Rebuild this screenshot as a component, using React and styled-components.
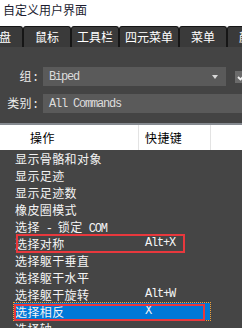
import React from 'react';
import styled, { createGlobalStyle } from 'styled-components';

const Global = createGlobalStyle`
  html, body { margin: 0; padding: 0; background: #444444; }
  body { font-family: "Noto Sans CJK SC", "Noto Sans", sans-serif; }
`;

const Window = styled.div`
  width: 242px;
  height: 328px;
  overflow: hidden;
  display: flex;
  flex-direction: column;
  background: #444444;
`;

const TitleBar = styled.div`
  flex: none;
  height: 26px;
  box-sizing: border-box;
  padding: 1px 0 0 3px;
  background: #ffffff;
  color: #1c1c30;
  font-size: 12px;
  line-height: 17px;
`;

const TabStrip = styled.div`
  flex: none;
  height: 21px;
  display: flex;
  background: #ffffff;
  overflow: hidden;
`;

const Tab = styled.div`
  flex: none;
  min-width: 48px;
  height: 21px;
  box-sizing: border-box;
  padding: 0 5px;
  margin-left: ${(p) => (p.$offset ? `${p.$offset}px` : '0')};
  border: 1px solid #161616;
  border-bottom: none;
  border-radius: 3px 3px 0 0;
  background: #3a3a3a;
  color: #ffffff;
  font-size: 12px;
  line-height: 19px;
  letter-spacing: 0;
  text-align: center;
  white-space: nowrap;
`;

const Form = styled.div`
  flex: none;
  display: flex;
  flex-direction: column;
  gap: 8px;
  padding: 20px 0 10px 0;
`;

const FieldRow = styled.div`
  display: flex;
  align-items: center;
  height: 19px;
`;

const Label = styled.div`
  flex: none;
  width: 38px;
  margin-right: 5px;
  text-align: right;
  color: #ececec;
  font-size: 12px;
  line-height: 19px;
  letter-spacing: 0.4px;
  white-space: nowrap;
`;

const Latin = styled.span`
  font-family: "Liberation Mono", monospace;
  font-size: 12px;
  letter-spacing: -1.2px;
`;

const Select = styled.div`
  flex: none;
  width: ${(p) => p.$w}px;
  height: 19px;
  box-sizing: border-box;
  display: flex;
  align-items: center;
  justify-content: space-between;
  padding: 0 8px 0 6px;
  background: #5a5a5a;
  color: #dcdcdc;
  font-family: "Liberation Mono", monospace;
  font-size: 12px;
  letter-spacing: -1.2px;
  white-space: nowrap;
`;

const Arrow = styled.span`
  width: 0;
  height: 0;
  border-left: 3px solid transparent;
  border-right: 3px solid transparent;
  border-top: 4px solid #d8d8d8;
`;

const CheckBox = styled.div`
  flex: none;
  width: 13px;
  height: 12px;
  margin-left: 9px;
  background: #6b6b6b;
  display: flex;
  align-items: center;
  justify-content: center;
`;

const Separator = styled.div`
  flex: none;
  height: 2px;
  background: #858a90;
`;

const Header = styled.div`
  flex: none;
  height: 25px;
  display: grid;
  grid-template-columns: 139px 72px 1fr;
  background: #ffffff;
`;

const HeadCell = styled.div`
  border-right: ${(p) => (p.$last ? 'none' : '1px solid #e3e3e3')};
  padding-left: ${(p) => p.$pad}px;
  color: #000000;
  font-size: 12px;
  line-height: 25px;
  letter-spacing: 0.4px;
  white-space: nowrap;
`;

const List = styled.div`
  flex: 1;
  display: flex;
  flex-direction: column;
  background: #454545;
`;

const Row = styled.div`
  flex: none;
  height: 17px;
  padding-left: 14px;
  display: flex;
`;

const Item = styled.div`
  position: relative;
  width: 196px;
  height: 17px;
  box-sizing: border-box;
  display: grid;
  grid-template-columns: 124px 72px;
  background: ${(p) => (p.$selected ? '#0078d7' : 'transparent')};
  outline: ${(p) => (p.$selected ? '1px dotted #f2a23a' : 'none')};
  color: #f4f4f4;
  font-size: 12px;
  line-height: 17px;
  white-space: nowrap;
`;

const NameCell = styled.div`
  padding-left: 1px;
  letter-spacing: 0.4px;
`;

const KeyCell = styled.div`
  padding-left: 7px;
  font-family: "Liberation Mono", monospace;
  letter-spacing: -1.2px;
`;

const Highlight = styled.div`
  position: absolute;
  top: ${(p) => p.$top}px;
  left: ${(p) => p.$left}px;
  width: ${(p) => p.$w}px;
  height: ${(p) => p.$h}px;
  box-sizing: border-box;
  border: 2px solid #e8383d;
  pointer-events: none;
`;

const tabs = [
  { label: '键盘', offset: -25 },
  { label: '鼠标' },
  { label: '工具栏' },
  { label: '四元菜单' },
  { label: '菜单' },
  { label: '颜色' },
];

const rows = [
  { name: '显示骨骼和对象' },
  { name: '显示足迹' },
  { name: '显示足迹数' },
  { name: '橡皮圈模式' },
  { name: (<>选择<Latin> - </Latin>锁定<Latin> COM</Latin></>) },
  { name: '选择对称', key: 'Alt+X', box: { top: -1, left: 2, w: 169, h: 19 } },
  { name: '选择躯干垂直' },
  { name: '选择躯干水平' },
  { name: '选择躯干旋转', key: 'Alt+W' },
  { name: '选择相反', key: 'X', selected: true, box: { top: 1, left: 0, w: 191, h: 17 } },
  { name: '选择轴' },
];

export default function App() {
  return (
    <>
      <Global />
      <Window>
        <TitleBar>自定义用户界面</TitleBar>
        <TabStrip>
          {tabs.map((t) => (
            <Tab key={t.label} $offset={t.offset}>{t.label}</Tab>
          ))}
        </TabStrip>
        <Form>
          <FieldRow>
            <Label>组<Latin>:</Latin></Label>
            <Select $w={183}>
              <span>Biped</span>
              <Arrow />
            </Select>
            <CheckBox>
              <svg width="9" height="8" viewBox="0 0 9 8">
                <path d="M1 4 L3.5 6.5 L8 1.5" fill="none" stroke="#f0f0f0" strokeWidth="1.8" />
              </svg>
            </CheckBox>
          </FieldRow>
          <FieldRow>
            <Label>类别<Latin>:</Latin></Label>
            <Select $w={210}>
              <span>All Commands</span>
            </Select>
          </FieldRow>
        </Form>
        <Separator />
        <Header>
          <HeadCell $pad={30}>操作</HeadCell>
          <HeadCell $pad={6}>快捷键</HeadCell>
          <HeadCell $last />
        </Header>
        <List>
          {rows.map((r, i) => (
            <Row key={i}>
              <Item $selected={r.selected}>
                <NameCell>{r.name}</NameCell>
                <KeyCell>{r.key || ''}</KeyCell>
                {r.box && <Highlight $top={r.box.top} $left={r.box.left} $w={r.box.w} $h={r.box.h} />}
              </Item>
            </Row>
          ))}
        </List>
      </Window>
    </>
  );
}
